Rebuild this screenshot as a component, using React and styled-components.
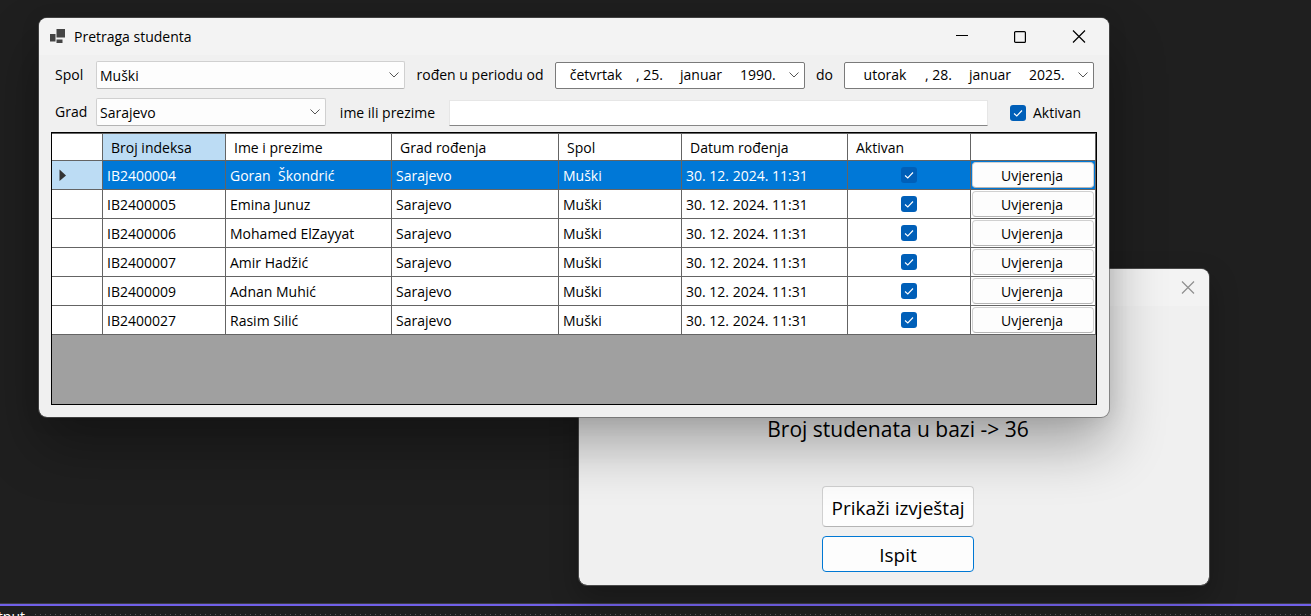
import React from "react";
import styled, { createGlobalStyle, css } from "styled-components";

const GlobalStyle = createGlobalStyle`
  * { box-sizing: border-box; }
  body {
    margin: 0;
    background: #1f1f1f;
    color: #000;
    font-family: "Open Sans", "Noto Sans", sans-serif;
    font-size: 14px;
    line-height: 20px;
  }
  button, input, select { font: inherit; color: inherit; }
`;

const Desktop = styled.main`
  position: relative;
  display: flex;
  flex-direction: column;
  justify-content: flex-end;
  height: 100vh;
  min-height: 600px;
  overflow: hidden;
`;

const OutputDock = styled.footer`
  display: flex;
  height: 13px;
  overflow: hidden;
  border-top: 1px solid #3d3d46;
  box-shadow: inset 0 2px #7160e8;
  color: #fff;
`;

const DockTitle = styled.span`
  width: 35px;
  padding: 5px 10px 0 0;
  display: flex;
  justify-content: flex-end;
  line-height: 16px;
`;

const DockGrip = styled.span`
  flex: 1;
  margin-top: 10px;
  background: repeating-linear-gradient(90deg, #5a5a5a 0 1px, transparent 1px 5px);
  height: 1px;
`;

const Window = styled.section`
  position: absolute;
  left: ${(p) => p.$left}px;
  top: ${(p) => p.$top}px;
  width: ${(p) => p.$width};
  border: 1px solid ${(p) => (p.$active ? "rgba(90, 90, 90, 0.6)" : "#4a4a4a")};
  border-radius: 9px;
  background: #f0f0f0;
  background-clip: padding-box;
  overflow: hidden;
  box-shadow: ${(p) =>
    p.$active
      ? "0 28px 56px rgba(0, 0, 0, 0.32), 0 2px 20px rgba(0, 0, 0, 0.08)"
      : "0 12px 28px rgba(0, 0, 0, 0.25)"};
`;

const TitleBar = styled.header`
  display: flex;
  align-items: center;
  height: 37px;
  padding-left: 11px;
  background: #f3f3f3;
`;

const WindowTitle = styled.h1`
  flex: 1;
  margin: 0 0 0 8px;
  font-size: 14px;
  font-weight: 400;
`;

const CaptionButton = styled.button`
  display: grid;
  place-items: center;
  width: 58px;
  height: 37px;
  padding: 0;
  border: 0;
  background: none;
  color: ${(p) => (p.$muted ? "#8f8f8f" : "#000")};
  &:last-child { width: ${(p) => (p.$muted ? 42 : 60)}px; }
`;

const Form = styled.form`
  padding: 6px 12px 12px;
`;

const Filters = styled.div`
  display: flex;
  flex-direction: column;
  gap: 9px;
  padding: 0 3px 0 4px;
  margin-bottom: 6px;
`;

const FilterRow = styled.div`
  display: flex;
  align-items: center;
  height: 28px;
`;

const FieldLabel = styled.label`
  width: ${(p) => p.$width}px;
  padding-top: ${(p) => (p.$low ? 2 : 0)}px;
  text-align: ${(p) => p.$align || "left"};
  white-space: nowrap;
`;

const boxed = css`
  border: 1px solid #d0d0d0;
  border-bottom-color: #b4b4b4;
  border-radius: 2px;
  background: #fdfdfd;
`;

const ComboBox = styled.div`
  display: grid;
  align-items: center;
  height: 28px;
  flex: ${(p) => (p.$grow ? "1" : "0 0 230px")};
  ${boxed}
  > * { grid-area: 1 / 1; }
  > svg { justify-self: end; margin-right: 4px; pointer-events: none; }
`;

const ComboSelect = styled.select`
  appearance: none;
  width: 100%;
  height: 26px;
  padding: 2px 24px 0 3px;
  border: 0;
  background: none;
`;

const DatePicker = styled.button`
  display: flex;
  align-items: center;
  width: 250px;
  height: 27px;
  padding: 0 4px 0 0;
  border: 1px solid #7a7a7a;
  border-radius: 2px;
  background: #fff;
  text-align: left;
  white-space: nowrap;
`;

const DatePart = styled.span`
  width: ${(p) => p.$width}px;
  text-align: ${(p) => p.$align || "left"};
`;

const TextBox = styled.input`
  flex: 1;
  min-width: 0;
  height: 26px;
  margin-top: 2px;
  padding: 0 4px;
  border: 1px solid #e6e6e6;
  border-bottom-color: #868686;
  background: #fff;
`;

const CheckLabel = styled.label`
  display: flex;
  align-items: center;
  gap: 7px;
  width: 106px;
  padding: 2px 0 0 22px;
`;

const CheckHolder = styled.span`
  display: inline-grid;
  width: 16px;
  height: 16px;
  vertical-align: middle;
  > * { grid-area: 1 / 1; }
  > svg { pointer-events: none; }
`;

const CheckInput = styled.input`
  appearance: none;
  width: 16px;
  height: 16px;
  margin: 0;
  border-radius: 3px;
  background: #005fb8;
`;

const GridArea = styled.div`
  min-height: 273px;
  border: 1px solid #000;
  background: #a0a0a0;
`;

const Table = styled.table`
  width: 100%;
  table-layout: fixed;
  border-collapse: separate;
  border-spacing: 0;
  border-top: 1px solid #646464;
  background: #fff;
`;

const HeadCell = styled.th`
  height: 27px;
  padding: 2px 8px 0;
  border: solid #646464;
  border-width: 0 1px 1px 0;
  background: ${(p) => (p.$current ? "#bcdcf4" : "#fff")};
  font-weight: 400;
  text-align: left;
  line-height: 20px;
`;

const Row = styled.tr`
  background: ${(p) => (p.$selected ? "#0078d7" : "#fff")};
  color: ${(p) => (p.$selected ? "#fff" : "#000")};
`;

const Cell = styled.td`
  height: 29px;
  padding: 2px 4px 0;
  border: solid #646464;
  border-width: 0 1px 1px 0;
  white-space: pre;
  line-height: 20px;
`;

const CheckCell = styled(Cell)`
  padding: 0;
  text-align: center;
  line-height: 0;
`;

const RowMarker = styled.th`
  padding: 0 7px;
  border: solid #646464;
  border-width: 0 1px 1px 0;
  background: ${(p) => (p.$current ? "#bcdcf4" : "#fff")};
  text-align: left;
  line-height: 0;
`;

const ButtonCell = styled.td`
  padding: 0 1px;
  border: solid #646464;
  border-width: 0 1px 1px 0;
`;

const RowButton = styled.button`
  display: block;
  width: 100%;
  height: 26px;
  padding: 2px 2px 0 0;
  ${boxed}
  border-radius: 4px;
  color: #000;
`;

const Summary = styled.div`
  display: flex;
  flex-direction: column;
  align-items: center;
  padding: 109px 0 13px 8px;
  font-size: 20px;
  line-height: 28px;
`;

const Count = styled.p`
  margin: 0 0 43px;
  font-size: 21px;
`;

const ActionButton = styled.button`
  width: 152px;
  height: ${(p) => (p.$focused ? 36 : 41)}px;
  margin-bottom: ${(p) => (p.$focused ? 0 : 9)}px;
  padding: 2px 0 0;
  white-space: nowrap;
  font-size: 19px;
  ${boxed}
  border-radius: 4px;
  ${(p) => p.$focused && "border-color: #0078d4;"}
`;

const Chevron = () => (
  <svg width="12" height="8" viewBox="0 0 12 8" fill="none" stroke="#555" aria-hidden="true">
    <path d="M1.5 1.5 6 6l4.500-4.500" />
  </svg>
);

const CloseGlyph = () => (
  <svg width="14" height="14" viewBox="0 0 14 14" fill="none" stroke="currentColor" strokeWidth="1.200" aria-hidden="true">
    <path d="M1 .5l12 12M13 .5 1 12.500" />
  </svg>
);

const AppIcon = () => (
  <svg width="16" height="16" viewBox="0 0 16 16" fill="#444" aria-hidden="true">
    <rect x="0" y="5" width="5.500" height="7.500" />
    <rect x="6.500" y="0" width="8.500" height="8.500" />
    <rect x="6.500" y="10.500" width="6" height="3.500" />
  </svg>
);

function CheckBox(props) {
  return (
    <CheckHolder>
      <CheckInput type="checkbox" defaultChecked {...props} />
      <svg width="16" height="16" viewBox="0 0 16 16" fill="none" stroke="#fff" strokeWidth="1.100" aria-hidden="true">
        <path d="M4 8.500 6.800 11 12 5.500" />
      </svg>
    </CheckHolder>
  );
}

function Combo({ id, value, grow }) {
  return (
    <ComboBox $grow={grow}>
      <ComboSelect id={id} defaultValue={value}>
        <option>{value}</option>
      </ComboSelect>
      <Chevron />
    </ComboBox>
  );
}

function DateField({ id, day, date, month, year }) {
  return (
    <DatePicker id={id} type="button" aria-haspopup="dialog">
      <DatePart $width={80} $align="center">{day}</DatePart>
      <DatePart $width={44}>, {date}</DatePart>
      <DatePart $width={60}>{month}</DatePart>
      <DatePart $width={48}>{year}</DatePart>
      <Chevron />
    </DatePicker>
  );
}

const columns = [
  ["Broj indeksa", 123],
  ["Ime i prezime", 166],
  ["Grad rođenja", 167],
  ["Spol", 123],
  ["Datum rođenja", 166],
  ["Aktivan", 123],
];

const students = [
  ["IB2400004", "Goran  Škondrić"],
  ["IB2400005", "Emina Junuz"],
  ["IB2400006", "Mohamed ElZayyat"],
  ["IB2400007", "Amir Hadžić"],
  ["IB2400009", "Adnan Muhić"],
  ["IB2400027", "Rasim Silić"],
];

function StudentTable() {
  return (
    <Table>
      <colgroup>
        <col style={{ width: 51 }} />
        {columns.map(([name, width]) => (
          <col key={name} style={{ width }} />
        ))}
        <col />
      </colgroup>
      <thead>
        <tr>
          <HeadCell />
          {columns.map(([name], i) => (
            <HeadCell key={name} scope="col" $current={i === 0}>{name}</HeadCell>
          ))}
          <HeadCell />
        </tr>
      </thead>
      <tbody>
        {students.map(([index, name], i) => (
          <Row key={index} $selected={i === 0}>
            <RowMarker scope="row" $current={i === 0}>
              {i === 0 && (
                <svg width="8" height="12" viewBox="0 0 8 12" fill="#333" aria-hidden="true">
                  <path d="M0.500 0.500 7 6.500l-6.500 5.500z" />
                </svg>
              )}
            </RowMarker>
            <Cell>{index}</Cell>
            <Cell>{name}</Cell>
            <Cell>Sarajevo</Cell>
            <Cell>Muški</Cell>
            <Cell>30. 12. 2024. 11:31</Cell>
            <CheckCell><CheckBox aria-label={`Aktivan ${name}`} /></CheckCell>
            <ButtonCell><RowButton type="button">Uvjerenja</RowButton></ButtonCell>
          </Row>
        ))}
      </tbody>
    </Table>
  );
}

export default function App() {
  return (
    <Desktop>
      <GlobalStyle />
      <OutputDock>
        <DockTitle>Output</DockTitle>
        <DockGrip />
      </OutputDock>

      <Window $left={578} $top={268} $width="calc(100% - 679px)">
        <TitleBar>
          <WindowTitle />
          <CaptionButton type="button" $muted aria-label="Zatvori"><CloseGlyph /></CaptionButton>
        </TitleBar>
        <Summary>
          <Count>Broj studenata u bazi -&gt; 36</Count>
          <ActionButton type="button">Prikaži izvještaj</ActionButton>
          <ActionButton type="button" $focused>Ispit</ActionButton>
        </Summary>
      </Window>

      <Window $left={38} $top={17} $width="calc(100% - 239px)" $active>
        <TitleBar>
          <AppIcon />
          <WindowTitle>Pretraga studenta</WindowTitle>
          <CaptionButton type="button" aria-label="Minimiziraj">
            <svg width="12" height="12" stroke="currentColor" aria-hidden="true"><path d="M0 4.500h12" /></svg>
          </CaptionButton>
          <CaptionButton type="button" aria-label="Maksimiziraj">
            <svg width="12" height="12" fill="none" stroke="currentColor" strokeWidth="1.200" aria-hidden="true">
              <rect x="0.600" y="0.600" width="10.800" height="10.800" rx="1" />
            </svg>
          </CaptionButton>
          <CaptionButton type="button" aria-label="Zatvori"><CloseGlyph /></CaptionButton>
        </TitleBar>
        <Form>
          <Filters>
            <FilterRow>
              <FieldLabel htmlFor="spol" $width={41}>Spol</FieldLabel>
              <Combo id="spol" value="Muški" grow />
              <FieldLabel htmlFor="od" $width={150} $align="center">rođen u periodu od</FieldLabel>
              <DateField id="od" day="četvrtak" date="25." month="januar" year="1990." />
              <FieldLabel htmlFor="do" $width={39} $align="center">do</FieldLabel>
              <DateField id="do" day="utorak" date="28." month="januar" year="2025." />
            </FilterRow>
            <FilterRow>
              <FieldLabel htmlFor="grad" $width={41}>Grad</FieldLabel>
              <Combo id="grad" value="Sarajevo" />
              <FieldLabel htmlFor="ime" $width={123} $align="center" $low>ime ili prezime</FieldLabel>
              <TextBox id="ime" type="text" />
              <CheckLabel><CheckBox />Aktivan</CheckLabel>
            </FilterRow>
          </Filters>
          <GridArea><StudentTable /></GridArea>
        </Form>
      </Window>
    </Desktop>
  );
}
